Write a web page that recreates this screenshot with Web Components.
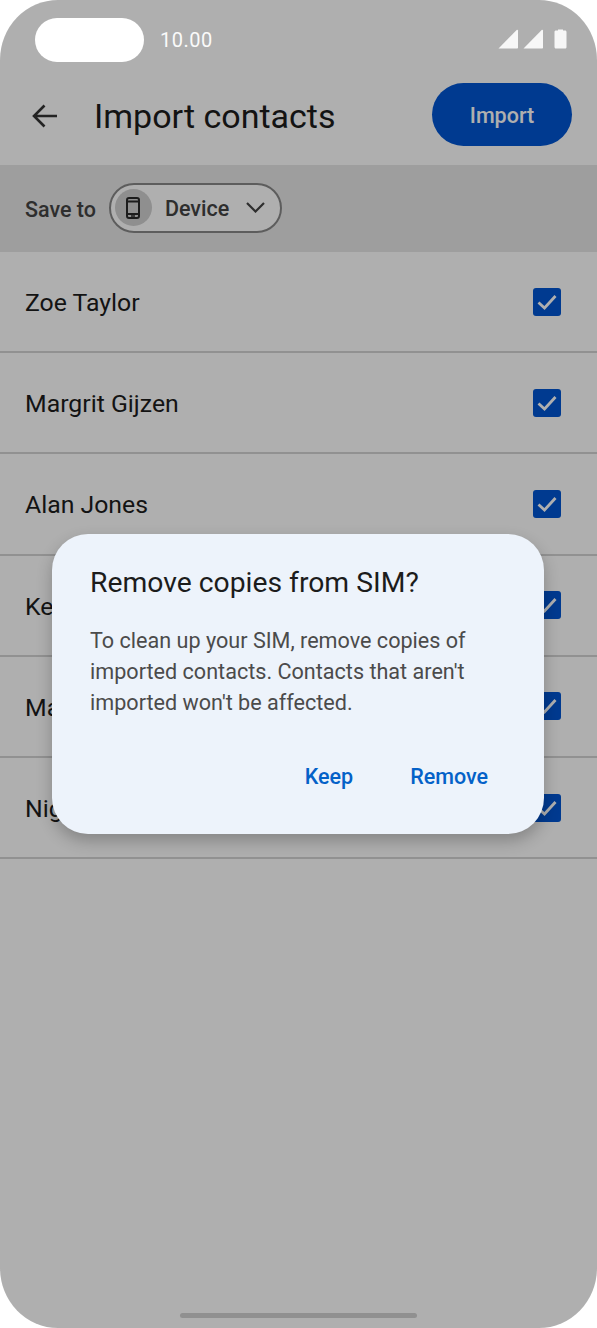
<!DOCTYPE html>
<html lang="en">
<head>
<meta charset="utf-8">
<title>Import contacts</title>
<style>
  html, body { margin:0; background:#fff; }
  body { font-family:Roboto, "Liberation Sans", sans-serif; }
</style>
</head>
<body>
<phone-screen>
  <status-bar slot="status" time="10.00"></status-bar>
  <app-header title="Import contacts" action="Import"></app-header>
  <save-bar label="Save to" device="Device"></save-bar>
  <contact-row name="Zoe Taylor"></contact-row>
  <contact-row name="Margrit Gijzen"></contact-row>
  <contact-row name="Alan Jones"></contact-row>
  <contact-row name="Ke"></contact-row>
  <contact-row name="Ma"></contact-row>
  <contact-row name="Nig"></contact-row>
  <confirm-dialog slot="dialog" heading="Remove copies from SIM?" cancel="Keep" confirm="Remove">
    To clean up your SIM, remove copies of<br>imported contacts. Contacts that aren't<br>imported won't be affected.
  </confirm-dialog>
</phone-screen>

<script>
class PhoneScreen extends HTMLElement {
  constructor() {
    super();
    this.attachShadow({ mode: 'open' });
    this.shadowRoot.innerHTML = `
      <style>
        :host { display:block; width:597px; height:1328px; }
        .screen {
          position:relative; width:100%; height:100%;
          display:flex; flex-direction:column;
          background:#fff; border-radius:58px / 60px; overflow:hidden;
        }
        .scrim { position:absolute; inset:0; background:rgba(0,0,0,.315); }
        .top { position:absolute; left:0; right:0; top:0; }
        .handle {
          position:absolute; left:180px; bottom:10px;
          width:237px; height:5px; border-radius:3px; background:#909090;
        }
        .content { padding-top:83px; }
      </style>
      <div class="screen">
        <div class="content"><slot></slot></div>
        <div class="scrim"></div>
        <div class="top"><slot name="status"></slot></div>
        <slot name="dialog"></slot>
        <div class="handle"></div>
      </div>
    `;
  }
}

class StatusBar extends HTMLElement {
  constructor() {
    super();
    this.attachShadow({ mode: 'open' });
    this.shadowRoot.innerHTML = `
      <style>
        :host { display:block; }
        .bar { height:83px; box-sizing:border-box; display:flex; align-items:flex-start; padding:18px 30px 0 35px; }
        .pill { width:109px; height:44px; border-radius:22px; background:#fff; }
        .time { margin-left:16px; font-size:20px; line-height:44px; letter-spacing:.5px; color:#fafafa; }
        svg { display:block; margin-left:auto; margin-top:11px; }
      </style>
      <div class="bar">
        <div class="pill"></div>
        <div class="time">${this.getAttribute('time')}</div>
        <svg width="69" height="20" viewBox="0 0 69 20" fill="#f7f7f7">
          <path d="M.5 19.500 18.700 1c.5-.5 1.300-.2 1.300.5v17c0 .6-.4 1-1 1z"/>
          <path d="M25.500 19.500 43.700 1c.5-.5 1.300-.2 1.300.5v17c0 .6-.4 1-1 1z"/>
          <path d="M58 1.500V.5h5v1h2c1 0 1.500.6 1.500 1.500v15c0 1-.6 1.500-1.500 1.500h-9c-1 0-1.500-.6-1.500-1.500V3c0-1 .6-1.500 1.500-1.500z" transform="translate(2 0)"/>
        </svg>
      </div>
    `;
  }
}

class AppHeader extends HTMLElement {
  constructor() {
    super();
    this.attachShadow({ mode: 'open' });
    this.shadowRoot.innerHTML = `
      <style>
        :host { display:block; }
        .head { height:82px; display:flex; align-items:flex-start; padding:0 25px 0 31px; }
        svg { display:block; margin-top:21px; flex:none; }
        h1 {
          margin:13px 0 0 37px; font-size:34px; line-height:40px; font-weight:400;
          color:#1c1c1c; flex:1; white-space:nowrap;
        }
        button {
          width:140px; height:63px; border:0; border-radius:32px; padding:2px 0 0;
          background:#0055d2; color:#fff;
          font:500 21.500px Roboto, sans-serif;
        }
      </style>
      <div class="head">
        <svg width="26" height="24" viewBox="0 0 26 24" fill="none" stroke="#333" stroke-width="2.600">
          <path d="M26 12H3M13.500 1.500 3 12l10.500 10.500"/>
        </svg>
        <h1>${this.getAttribute('title')}</h1>
        <button>${this.getAttribute('action')}</button>
      </div>
    `;
  }
}

class SaveBar extends HTMLElement {
  constructor() {
    super();
    this.attachShadow({ mode: 'open' });
    this.shadowRoot.innerHTML = `
      <style>
        :host { display:block; }
        .bar {
          height:87px; box-sizing:border-box; display:flex; align-items:center; gap:13px;
          padding:0 25px 2px; background:#e6e6e6; color:#444;
          font-size:21.500px; font-weight:500;
        }
        .label { padding-top:3px; }
        .chip {
          height:50px; width:173px; box-sizing:border-box; display:flex; align-items:center;
          border:2px solid #888; border-radius:25px; background:#fff; padding-left:4px;
        }
        .circle {
          width:37px; height:37px; border-radius:50%; background:#d0d0d0;
          display:flex; align-items:center; justify-content:center; flex:none;
        }
        .name { margin-left:13px; flex:1; padding-top:1px; }
        svg { display:block; }
        .chev { margin-right:15px; }
      </style>
      <div class="bar">
        <span class="label">${this.getAttribute('label')}</span>
        <div class="chip">
          <div class="circle">
            <svg width="14" height="22" viewBox="0 0 14 22" fill="none" stroke="#2a2a2a" stroke-width="2">
              <rect x="1" y="1" width="12" height="20" rx="2"/>
              <path d="M1 4.500h12M1 17h12"/>
              <path d="M5 19h4" stroke-width="1.400"/>
            </svg>
          </div>
          <span class="name">${this.getAttribute('device')}</span>
          <svg class="chev" width="19" height="11" viewBox="0 0 19 11" fill="none" stroke="#444" stroke-width="2.200">
            <path d="M1 1l8.500 8.500L18 1"/>
          </svg>
        </div>
      </div>
    `;
  }
}

class ContactRow extends HTMLElement {
  constructor() {
    super();
    this.attachShadow({ mode: 'open' });
    this.shadowRoot.innerHTML = `
      <style>
        :host { display:block; }
        .row {
          height:101.200px; box-sizing:border-box; display:flex; align-items:center;
          justify-content:space-between; padding:0 36px 0 25px;
          border-bottom:2px solid #d4d4d4; background:#fff;
          font-size:24.800px; color:#1c1c1c;
        }
        .row span { padding-top:2px; }
        .box {
          width:28px; height:28px; border-radius:3px; background:#0055d2;
          display:flex; align-items:center; justify-content:center;
        }
      </style>
      <div class="row">
        <span>${this.getAttribute('name')}</span>
        <div class="box">
          <svg width="22" height="18" viewBox="0 0 22 18" fill="none" stroke="#fff" stroke-width="2.800">
            <path d="M2.500 9.500 8.500 15 19.500 3"/>
          </svg>
        </div>
      </div>
    `;
  }
}

class ConfirmDialog extends HTMLElement {
  constructor() {
    super();
    this.attachShadow({ mode: 'open' });
    this.shadowRoot.innerHTML = `
      <style>
        :host {
          position:absolute; left:52px; top:534px; width:492px; height:300px;
          box-sizing:border-box; padding:31px 38px 0;
          display:flex; flex-direction:column;
          background:#edf3fb; border-radius:36px;
          box-shadow:0 7px 16px rgba(0,0,0,.24);
        }
        h2 { margin:0; font-size:28.300px; line-height:36px; font-weight:400; color:#1c1c1c; white-space:nowrap; }
        p { margin:24px 0 0; font-size:21.600px; line-height:31px; color:#4b4b4b; white-space:nowrap; }
        .actions { display:flex; justify-content:flex-end; gap:57px; margin-top:44px; padding-right:18px; }
        span { font-size:21.500px; line-height:30px; font-weight:500; color:#0461c8; }
      </style>
      <h2>${this.getAttribute('heading')}</h2>
      <p><slot></slot></p>
      <div class="actions">
        <span>${this.getAttribute('cancel')}</span>
        <span>${this.getAttribute('confirm')}</span>
      </div>
    `;
  }
}

customElements.define('phone-screen', PhoneScreen);
customElements.define('status-bar', StatusBar);
customElements.define('app-header', AppHeader);
customElements.define('save-bar', SaveBar);
customElements.define('contact-row', ContactRow);
customElements.define('confirm-dialog', ConfirmDialog);
</script>
</body>
</html>
